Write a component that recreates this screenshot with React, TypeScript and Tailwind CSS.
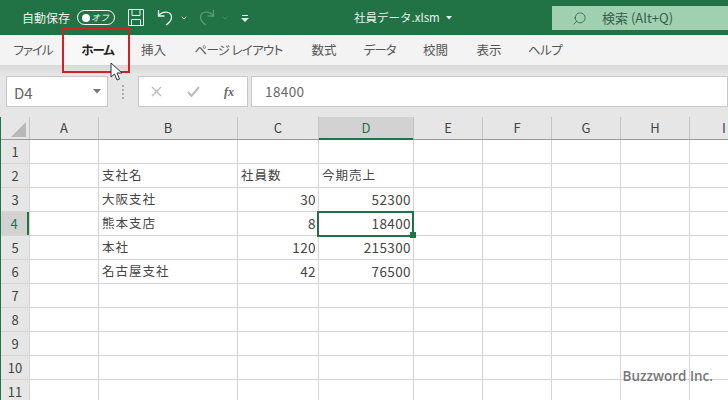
import { ChevronDown, Search } from "lucide-react";

const cols = [
  { name: "A", w: "w-[69px]" },
  { name: "B", w: "w-[139px]" },
  { name: "C", w: "w-[81px]" },
  { name: "D", w: "w-[95px]" },
  { name: "E", w: "w-[69px]" },
  { name: "F", w: "w-[69px]" },
  { name: "G", w: "w-[69px]" },
  { name: "H", w: "w-[69px]" },
  { name: "I", w: "w-[69px]" },
];

const tabs = [
  { label: "ファイル", w: "w-[64px] tracking-[-1px]" },
  { label: "ホーム", w: "w-[65px] tracking-[-1px]", active: true },
  { label: "挿入", w: "w-[47px]" },
  { label: "ページ レイアウト", w: "w-[123px] tracking-[-0.7px]" },
  { label: "数式", w: "w-[48px]" },
  { label: "データ", w: "w-[63px] tracking-[-1px]" },
  { label: "校閲", w: "w-[49px]" },
  { label: "表示", w: "w-[58px]" },
  { label: "ヘルプ", w: "w-[54px] tracking-[-0.5px]" },
];

const rows: Record<number, (string | null)[]> = {
  2: [null, "支社名", "社員数", "今期売上"],
  3: [null, "大阪支社", "30", "52300"],
  4: [null, "熊本支店", "8", "18400"],
  5: [null, "本社", "120", "215300"],
  6: [null, "名古屋支社", "42", "76500"],
};

export default function App() {
  return (
    <div className="relative h-[400px] w-[728px] overflow-hidden bg-white font-['Noto_Sans_CJK_JP','Liberation_Sans',sans-serif] text-[#444]">
      {/* TITLE BAR */}
      <div className="flex h-[35px] items-center bg-[#217346] text-[#e9f2ed]">
        <span className="ml-[22px] text-[12px]">自動保存</span>
        <div className="ml-[7px] flex h-[15px] w-[38px] items-center justify-between rounded-full border border-white pl-[4px] pr-[5px]">
          <span className="h-[8px] w-[8px] rounded-full bg-white" />
          <span className="text-[9px] italic leading-none">オフ</span>
        </div>
        <svg className="ml-[13px]" width="16" height="17" viewBox="0 0 16 17" fill="none" stroke="#e9f2ed">
          <path d="M.5.5h15v16H.5zM4 .5v6h8v-6M3.500 16.500v-6h9v6" />
        </svg>
        <svg className="ml-[13px]" width="17" height="17" viewBox="0 0 17 17" fill="none" stroke="#e9f2ed" strokeWidth="1.3">
          <path d="M1.500 1v6h6M1.500 7C5 2 14 1.500 14.500 8c.3 4-2.500 6-5.500 8" />
        </svg>
        <ChevronDown className="ml-[6px]" size={8} strokeWidth={3} color="#e9f2ed" />
        <svg className="ml-[10px]" width="17" height="17" viewBox="0 0 17 17" fill="none" stroke="#5b9a78" strokeWidth="1.3">
          <path d="M15.500 1v6h-6M15.500 7C12 2 3 1.500 2.500 8c-.3 4 2.500 6 5.500 8" />
        </svg>
        <ChevronDown className="ml-[6px]" size={8} strokeWidth={2} color="#5b9a78" />
        <svg className="ml-[12px]" width="8" height="8" viewBox="0 0 8 8" fill="#e9f2ed">
          <path d="M1 1h6v1H1zM0 4h8L4 8z" />
        </svg>
        <div className="ml-[105px] flex w-[110px] items-center gap-[6px] text-[11.5px]">
          <span className="whitespace-nowrap">社員データ.xlsm</span>
          <svg width="6" height="4" viewBox="0 0 6 4" fill="#e9f2ed">
            <path d="M0 0h6L3 3.500z" />
          </svg>
        </div>
        <div className="ml-[88px] mt-px flex h-[24px] flex-1 items-center bg-[#9fd0b0] pl-[20px] text-[#355f48]">
          <Search size={15} strokeWidth={1.3} className="-scale-x-100" />
          <span className="ml-[15px] text-[13px]">検索 (Alt+Q)</span>
        </div>
      </div>

      {/* RIBBON TABS */}
      <div className="flex h-[30px] bg-[#f3f3f3] pl-px text-[12.5px] [font-feature-settings:'palt']">
        {tabs.map((t) => (
          <div
            key={t.label}
            className={`flex items-center justify-center whitespace-nowrap ${t.w} ${t.active ? "bg-[#f8f8f8] font-bold text-[#222]" : "text-[#555]"}`}
          >
            {t.label}
          </div>
        ))}
      </div>

      {/* FORMULA BAR */}
      <div className="h-[52px] bg-[#e6e6e6] bg-gradient-to-b from-[#d8d8d8] to-[#e6e6e6] to-[10px]">
        <div className="flex pt-[11px]">
          <div className="ml-[6px] flex h-[31px] w-[102px] items-center justify-between border border-[#c8c8c8] bg-white pl-[7px] pr-[6px] text-[#666]">
            <span className="mt-[3px] text-[15px]">D4</span>
            <svg width="8" height="5" viewBox="0 0 8 5" fill="#777">
              <path d="M0 0h8L4 4.500z" />
            </svg>
          </div>
          <div className="flex w-[30px] flex-col items-center justify-center gap-[2px]">
            <span className="h-[2px] w-[2px] bg-[#aaa]" />
            <span className="h-[2px] w-[2px] bg-[#aaa]" />
            <span className="h-[2px] w-[2px] bg-[#aaa]" />
            <span className="h-[2px] w-[2px] bg-[#aaa]" />
          </div>
          <div className="flex h-[31px] w-[110px] items-center border border-[#c8c8c8] bg-white">
            <svg className="ml-[12px]" width="11" height="11" viewBox="0 0 11 11" stroke="#bbb" strokeWidth="1.4">
              <path d="M1 1l9 9M10 1l-9 9" />
            </svg>
            <svg className="ml-[25px]" width="13" height="11" viewBox="0 0 13 11" fill="none" stroke="#bbb" strokeWidth="2">
              <path d="M1 6l3.500 4L12 1" />
            </svg>
            <span className="ml-[24px] font-['Liberation_Serif',serif] text-[12px] font-bold italic text-[#666]">fx</span>
          </div>
          <div className="ml-[3px] flex h-[31px] flex-1 items-center border border-[#c8c8c8] bg-white pl-[13px] text-[13.5px] tracking-[0.4px] text-[#666]">
            18400
          </div>
        </div>
      </div>

      {/* SHEET */}
      <div className="border-l border-[#217346] text-[13px]">
        <div className="flex h-[23px] border-b border-[#9a9a9a] bg-[#e6e6e6]">
          <div className="flex w-[28px] shrink-0 items-end justify-end pb-[2px] pr-[3px]">
            <svg width="15" height="15" viewBox="0 0 15 15" fill="#b8b8b8">
              <path d="M15 0v15H0z" />
            </svg>
          </div>
          {cols.map((c) => (
            <div
              key={c.name}
              className={`flex shrink-0 items-center justify-center border-l border-[#c4c4c4] ${c.w} ${c.name === "D" ? "relative bg-[#d2d2d2] text-[#217346]" : ""}`}
            >
              {c.name}
              {c.name === "D" && <span className="absolute inset-x-0 -bottom-px h-[2px] bg-[#217346]" />}
            </div>
          ))}
        </div>
        {Array.from({ length: 11 }, (_, i) => i + 1).map((r) => (
          <div key={r} className="flex h-[24px] border-b border-[#d4d4d4]">
            <div
              className={`flex w-[28px] shrink-0 items-center justify-center ${r === 4 ? "border-r-2 border-r-[#217346] bg-[#d2d2d2] text-[#217346]" : "bg-[#e6e6e6]"}`}
            >
              {r}
            </div>
            {cols.map((c, ci) => {
              const v = rows[r]?.[ci] ?? "";
              const numeric = /^\d+$/.test(v);
              const selected = r === 4 && c.name === "D";
              return (
                <div
                  key={c.name}
                  className={`relative flex shrink-0 items-center overflow-visible whitespace-nowrap border-l border-[#d4d4d4] pl-[3px] pr-[2px] ${c.w} ${numeric ? "justify-end text-[13.5px] tracking-[0.4px]" : "text-[12.5px] tracking-[1px]"}`}
                >
                  {v}
                  {selected && (
                    <>
                      <span className="absolute -left-[2px] -top-px z-10 h-[26px] w-[97px] border-2 border-[#217346]" />
                      <span className="absolute -bottom-[3px] -right-[3px] z-10 h-[6px] w-[6px] bg-[#217346]" />
                    </>
                  )}
                </div>
              );
            })}
          </div>
        ))}
      </div>

      {/* red highlight + cursor + watermark */}
      <div className="absolute left-[62px] top-[27px] z-20 h-[46px] w-[68px] border-2 border-[#d42020]" />
      <svg className="absolute left-[110px] top-[62px] z-20" width="14" height="20" viewBox="0 0 14 20" fill="white" stroke="#333">
        <path d="M1 1v14l3.500-3 2.500 6 2.500-1-2.500-6H12z" />
      </svg>
      <div className="absolute right-[15px] top-[366px] z-20 font-['Open_Sans',sans-serif] text-[13.5px] font-semibold text-[#777]">
        Buzzword Inc.
      </div>
    </div>
  );
}
